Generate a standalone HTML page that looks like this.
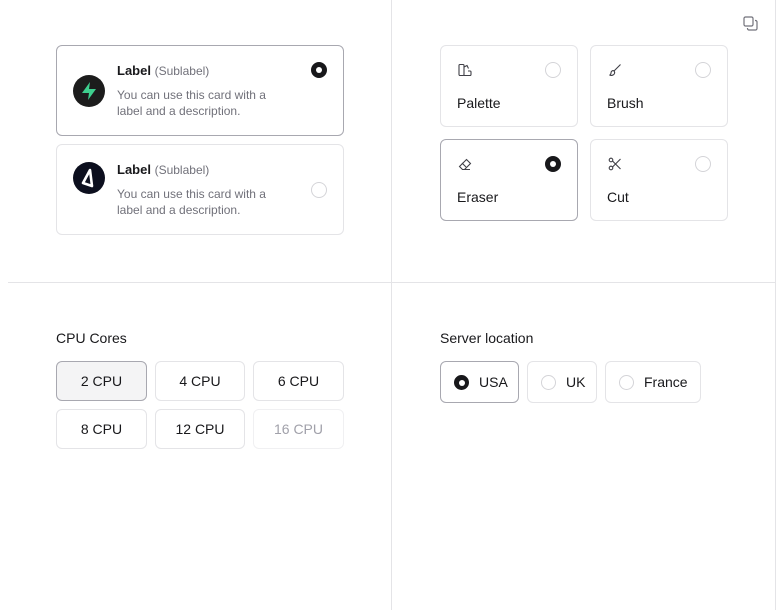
<!DOCTYPE html>
<html><head><meta charset="utf-8"><style>
*{box-sizing:border-box;margin:0;padding:0}
body{width:777px;height:610px;background:#fff;position:relative;overflow:hidden;font-family:"Liberation Sans",sans-serif;color:#18181b}
.a{position:absolute}
.card{position:absolute;border:1px solid #e4e4e7;border-radius:6px;background:#fff}
.sel{border-color:#a8a8b0}
.rad{position:absolute;width:16px;height:16px;border-radius:50%;border:1px solid #d4d4d8;background:#fff}
.rad.on{background:#18181b;border-color:#18181b}
.rad.on::after{content:"";position:absolute;left:4px;top:4px;width:6px;height:6px;border-radius:50%;background:#fff}
.lbl{font-size:13px;font-weight:bold}
.sub{font-size:12px;color:#71717a;font-weight:normal}
.desc{font-size:12px;color:#71717a;line-height:16px}
.t14{font-size:14px}
.btn{position:absolute;border:1px solid #e4e4e7;border-radius:6px;font-size:14px;display:flex;align-items:center;justify-content:center;background:#fff}
</style></head><body>
<div class="a" style="left:391px;top:0;width:1px;height:610px;background:#e4e4e7"></div>
<div class="a" style="left:775px;top:0;width:1px;height:610px;background:#e4e4e7"></div>
<div class="a" style="left:8px;top:282px;width:767px;height:1px;background:#e4e4e7"></div>

<div class="card sel" style="left:56px;top:45px;width:288px;height:91px"></div>
<div class="card" style="left:56px;top:144px;width:288px;height:91px"></div>
<svg class="a" style="left:73px;top:75px" width="32" height="32" viewBox="0 0 32 32"><circle cx="16" cy="16" r="16" fill="#1c1c1c"/><path d="M17 7 L9 18 H16 L15 25 L23 14 H16 Z" fill="#3ecf8e"/></svg>
<svg class="a" style="left:73px;top:162px" width="32" height="32" viewBox="0 0 32 32"><circle cx="16" cy="16" r="16" fill="#0c0f1e"/><path d="M17 8 L10 21 L19 24 Z" fill="none" stroke="#fff" stroke-width="2.6" stroke-linejoin="round"/></svg>
<div class="a lbl" style="left:117px;top:63px">Label <span class="sub">(Sublabel)</span></div>
<div class="a desc" style="left:117px;top:87px">You can use this card with a<br>label and a description.</div>
<div class="a lbl" style="left:117px;top:162px">Label <span class="sub">(Sublabel)</span></div>
<div class="a desc" style="left:117px;top:186px">You can use this card with a<br>label and a description.</div>
<div class="rad on" style="left:311px;top:62px"></div>
<div class="rad" style="left:311px;top:182px"></div>

<svg class="a" style="left:743px;top:16px" width="15" height="15" viewBox="0 0 15 15" fill="none" stroke="#71717a" stroke-width="1.2"><rect x="1" y="1" width="9" height="9" rx="1.5"/><path d="M12 4.5h.5a1.5 1.5 0 0 1 1.5 1.5v6.5a1.5 1.5 0 0 1-1.5 1.5H6a1.5 1.5 0 0 1-1.5-1.5V12"/></svg>

<div class="card" style="left:440px;top:45px;width:138px;height:82px"></div>
<div class="card" style="left:590px;top:45px;width:138px;height:82px"></div>
<div class="card sel" style="left:440px;top:139px;width:138px;height:82px"></div>
<div class="card" style="left:590px;top:139px;width:138px;height:82px"></div>
<svg class="a" style="left:458px;top:63px" width="14" height="14" viewBox="0 0 14 14" fill="none" stroke="#3f3f46" stroke-width="1.1"><rect x="1" y="1.5" width="5" height="11" rx="1"/><path d="M6 4l3-1.5 1.5 3M6 12.5h6a1 1 0 0 0 1-1V9a1 1 0 0 0-1-1H10"/></svg>
<svg class="a" style="left:608px;top:63px" width="14" height="14" viewBox="0 0 14 14" fill="none" stroke="#3f3f46" stroke-width="1.1"><path d="M12.5 1.5L6 8M6 8c-1-1-3 0-3 2 0 1-1 2-1.5 2 2 1 4.5 0 5-1.5.3-1 0-2-.5-2.5z"/></svg>
<svg class="a" style="left:458px;top:157px" width="14" height="14" viewBox="0 0 14 14" fill="none" stroke="#3f3f46" stroke-width="1.1"><path d="M4 12.5h8M4.5 12.5L1.5 9.5 8.5 2.5l4 4-6 6M4 6l4 4"/></svg>
<svg class="a" style="left:608px;top:157px" width="14" height="14" viewBox="0 0 14 14" fill="none" stroke="#3f3f46" stroke-width="1.1"><circle cx="3" cy="3" r="1.8"/><circle cx="3" cy="11" r="1.8"/><path d="M4.5 4l8 8M4.5 10l8-8"/></svg>
<div class="rad" style="left:545px;top:62px"></div>
<div class="rad" style="left:695px;top:62px"></div>
<div class="rad on" style="left:545px;top:156px"></div>
<div class="rad" style="left:695px;top:156px"></div>
<div class="a t14" style="left:457px;top:95px">Palette</div>
<div class="a t14" style="left:607px;top:95px">Brush</div>
<div class="a t14" style="left:457px;top:189px">Eraser</div>
<div class="a t14" style="left:607px;top:189px">Cut</div>

<div class="a t14" style="left:56px;top:330px">CPU Cores</div>
<div class="btn" style="left:56px;top:361px;width:91px;height:40px;background:#f4f4f5;border-color:#a8a8b0">2 CPU</div>
<div class="btn" style="left:155px;top:361px;width:90px;height:40px">4 CPU</div>
<div class="btn" style="left:253px;top:361px;width:91px;height:40px">6 CPU</div>
<div class="btn" style="left:56px;top:409px;width:91px;height:40px">8 CPU</div>
<div class="btn" style="left:155px;top:409px;width:90px;height:40px">12 CPU</div>
<div class="btn" style="left:253px;top:409px;width:91px;height:40px;color:#a1a1aa;border-color:#f0f0f2">16 CPU</div>

<div class="a t14" style="left:440px;top:330px">Server location</div>
<div class="btn" style="left:440px;top:361px;width:79px;height:42px;border-color:#a8a8b0;justify-content:flex-start;padding-left:13px"><div class="rad on" style="position:relative;width:15px;height:15px;margin-right:10px"></div>USA</div>
<div class="btn" style="left:527px;top:361px;width:70px;height:42px;justify-content:flex-start;padding-left:13px"><div class="rad" style="position:relative;width:15px;height:15px;margin-right:10px"></div>UK</div>
<div class="btn" style="left:605px;top:361px;width:96px;height:42px;justify-content:flex-start;padding-left:13px"><div class="rad" style="position:relative;width:15px;height:15px;margin-right:10px"></div>France</div>
</body></html>
